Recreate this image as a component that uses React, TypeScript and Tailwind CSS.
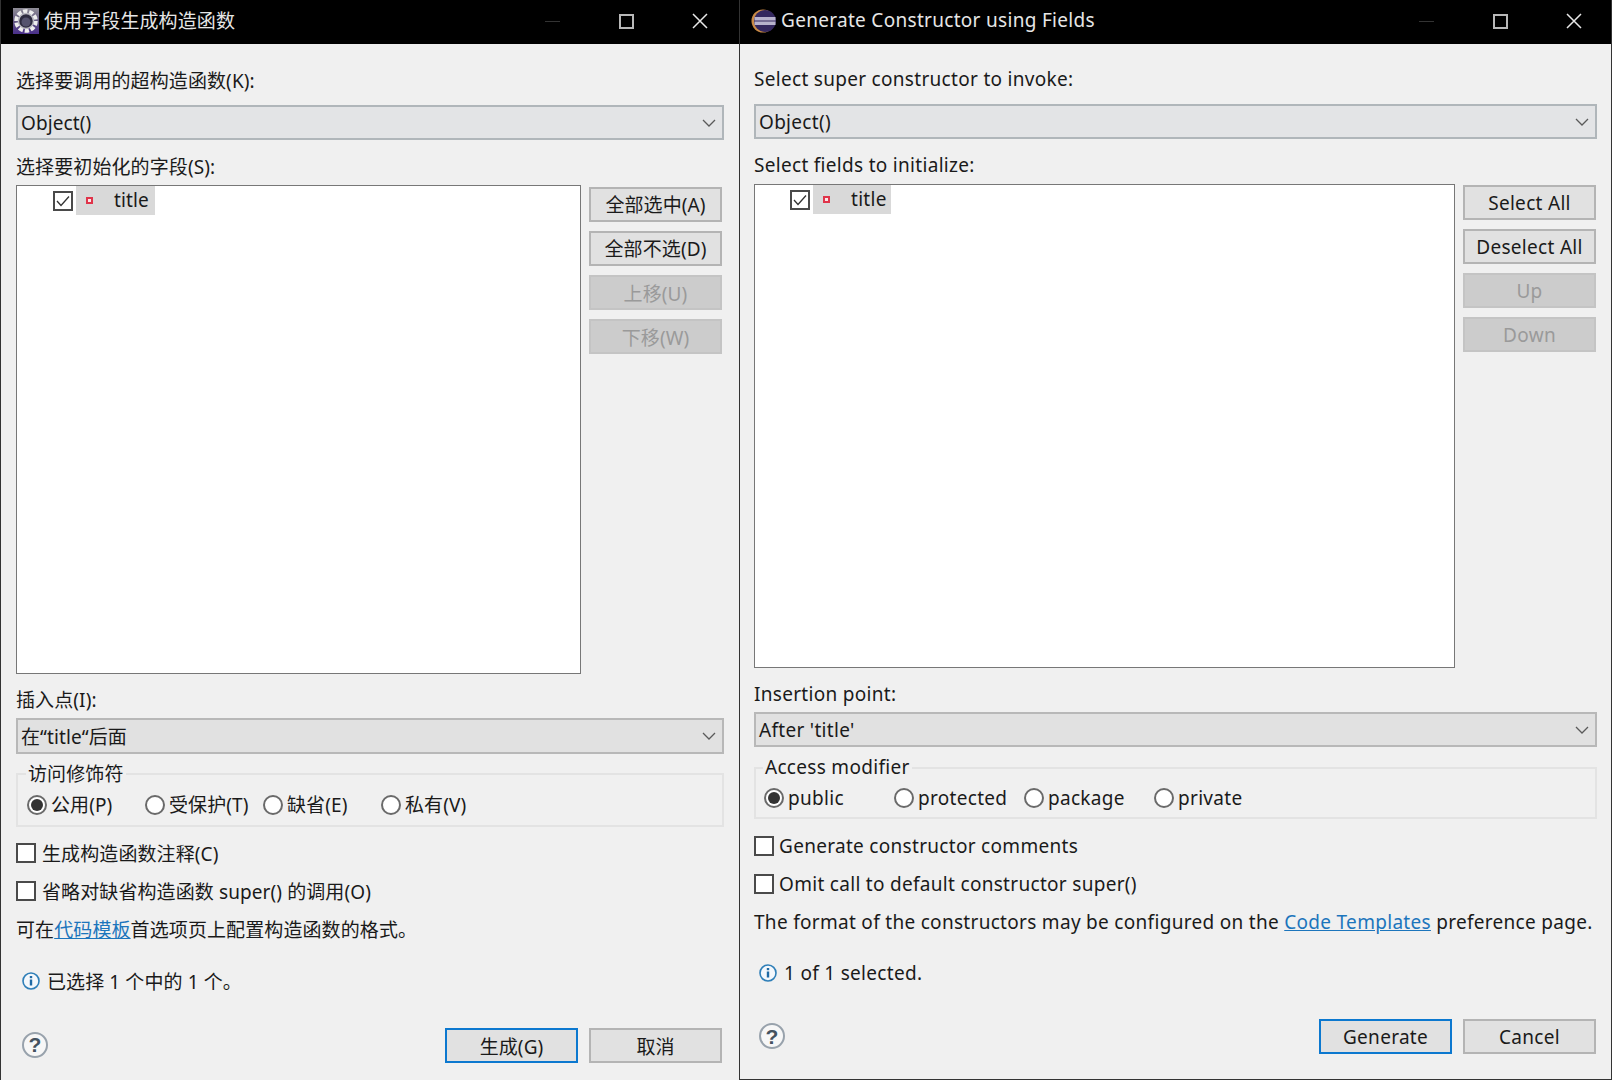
import React from "react";

const LeftLogo = () => (
  <svg width="26" height="26" viewBox="0 0 26 26" className="shrink-0">
    <defs>
      <linearGradient id="leftLogoBg" x1="0" y1="0" x2="0" y2="1">
        <stop offset="0" stopColor="#8f8d96" />
        <stop offset="0.55" stopColor="#5f5480" />
        <stop offset="1" stopColor="#4a2f8c" />
      </linearGradient>
    </defs>
    <rect x="0" y="0" width="26" height="26" fill="url(#leftLogoBg)" />
    <circle cx="13" cy="13" r="9.5" fill="none" stroke="#eeeeee" strokeWidth="4.5" strokeDasharray="4.2 1.75" />
    <circle cx="13" cy="13" r="7.5" fill="#2e2c40" stroke="#b9b8c0" strokeWidth="1.5" />
    <circle cx="13" cy="14" r="4.5" fill="#55536e" />
  </svg>
);

const RightLogo = () => (
  <svg width="25" height="24" viewBox="0 0 25 24" className="shrink-0">
    <circle cx="12" cy="12" r="11.5" fill="#c98a45" />
    <circle cx="14" cy="12" r="11" fill="#34285f" />
    <rect x="3.5" y="8" width="21" height="3.5" fill="#b7b2cc" />
    <rect x="3.5" y="12.5" width="21" height="3.5" fill="#b7b2cc" />
  </svg>
);

const WindowControls = () => (
  <div className="flex h-full">
    <div className="flex h-full w-[73px] items-center justify-center">
      <div className="h-px w-[15px] bg-[#333333]" />
    </div>
    <div className="flex h-full w-[74px] items-center justify-center">
      <div className="h-[15px] w-[15px] border-2 border-[#b8b8b8]" />
    </div>
    <div className="flex h-full w-[74px] items-center justify-center">
      <svg width="16" height="16" viewBox="0 0 16 16">
        <path d="M1 1 L15 15 M15 1 L1 15" stroke="#e8e8e8" strokeWidth="1.5" fill="none" />
      </svg>
    </div>
  </div>
);

const Combo = ({ children, className, tone }: { children: React.ReactNode; className: string; tone: string }) => (
  <div className={`flex items-center justify-between border-2 pl-[3px] pr-[6px] leading-none ${tone} ${className}`}>
    <span className="pt-[2px]">{children}</span>
    <svg width="14" height="8" viewBox="0 0 14 8">
      <path d="M1 1 L7 7 L13 1" stroke="#5a5a5a" strokeWidth="1.3" fill="none" />
    </svg>
  </div>
);

const PushButton = ({
  text,
  disabled,
  primary,
  className,
}: {
  text: string;
  disabled?: boolean;
  primary?: boolean;
  className: string;
}) => {
  let tone = "border-2 border-[#b4b4b4] bg-[#e1e1e1] text-[#1a1a1a]";
  if (disabled) tone = "border-2 border-[#c4c4c4] bg-[#cccccc] text-[#9a9a9a]";
  if (primary) tone = "border-2 border-[#0c78cf] bg-[#e1e1e1] text-[#1a1a1a]";
  return <div className={`flex w-[133px] items-center justify-center ${tone} ${className}`}>{text}</div>;
};

const Radio = ({ label, checked, className }: { label: string; checked?: boolean; className: string }) => (
  <div className={`flex items-center ${className}`}>
    <div className="flex h-[20px] w-[20px] shrink-0 items-center justify-center rounded-full border-2 border-[#6a6a6a] bg-white">
      {checked && <div className="h-[12px] w-[12px] rounded-full bg-[#333333]" />}
    </div>
    <span className="ml-[4px] whitespace-nowrap">{label}</span>
  </div>
);

const Check = ({ label, className, gap }: { label: string; className: string; gap: string }) => (
  <div className={`flex h-[20px] items-center ${className}`}>
    <div className="h-[20px] w-[20px] shrink-0 border-2 border-[#4a4a4a] bg-white" />
    <span className={`whitespace-nowrap ${gap}`}>{label}</span>
  </div>
);

const TreeItem = ({ wClass, indent }: { wClass: string; indent: string }) => (
  <div className={`flex h-[29px] items-center ${indent}`}>
    <div className="flex h-[20px] w-[20px] shrink-0 items-center justify-center border-2 border-[#4a4a4a] bg-white">
      <svg width="14" height="12" viewBox="0 0 14 12">
        <path d="M1 6 L5 10.5 L13 1.5" stroke="#333333" strokeWidth="1.3" fill="none" />
      </svg>
    </div>
    <div className={`ml-[3px] flex h-[29px] items-center bg-[#d9d9d9] pl-[10px] ${wClass}`}>
      <div className="h-[7px] w-[7px] border-[2px] border-[#e0344a] bg-[#fbe6e8]" />
      <span className="ml-[21px] leading-none">title</span>
    </div>
  </div>
);

const InfoIcon = () => (
  <svg width="18" height="18" viewBox="0 0 18 18" className="shrink-0">
    <circle cx="9" cy="9" r="8" fill="#f4f8fc" stroke="#2f7fb8" strokeWidth="1.6" />
    <rect x="7.8" y="7.5" width="2.4" height="6" fill="#1f6aa5" />
    <rect x="7.8" y="4" width="2.4" height="2.2" fill="#1f6aa5" />
  </svg>
);

const HelpIcon = () => (
  <div className="flex h-[26px] w-[26px] items-center justify-center rounded-full border-2 border-[#98a2ac] bg-[#f7f7f7] font-['Liberation_Sans',sans-serif] text-[21px] font-bold leading-none text-[#44525f]">
    ?
  </div>
);

const LeftDialog = () => (
  <div className="flex h-[1080px] w-[739px] shrink-0 flex-col border-l border-[#333333] bg-[#f0f0f0] text-[19px] leading-[24px] tracking-[0.1px] text-[#1a1a1a] font-['Noto_Sans','Noto_Sans_CJK_SC',sans-serif]">
    <div className="flex h-[44px] shrink-0 items-center justify-between bg-black pb-[2px] pl-[12px] pr-[2px] text-[#e6e6e6]">
      <div className="flex items-center gap-[5px]">
        <LeftLogo />
        <span className="mb-[1px]">使用字段生成构造函数</span>
      </div>
      <WindowControls />
    </div>
    <div className="flex flex-1 flex-col pl-[15px] pr-[15px]">
      <div className="mt-[24px] h-[24px] leading-[26px]">选择要调用的超构造函数(K):</div>
      <Combo className="mt-[13px] h-[35px]" tone="border-[#b0b6ba] bg-[#e3e4e6]">
        Object()
      </Combo>
      <div className="mt-[14px] h-[24px] leading-[26px]">选择要初始化的字段(S):</div>
      <div className="mt-[7px] flex h-[489px] gap-[8px]">
        <div className="w-[565px] border border-[#777777] bg-white">
          <TreeItem wClass="w-[79px]" indent="pl-[36px]" />
        </div>
        <div className="flex flex-col gap-[9px] pt-[2px]">
          <PushButton text="全部选中(A)" className="h-[35px]" />
          <PushButton text="全部不选(D)" className="h-[35px]" />
          <PushButton text="上移(U)" disabled className="h-[35px] pt-[2px]" />
          <PushButton text="下移(W)" disabled className="h-[35px] pt-[2px]" />
        </div>
      </div>
      <div className="mt-[13px] h-[24px] leading-[26px]">插入点(I):</div>
      <Combo className="mt-[7px] h-[36px]" tone="border-[#b8b8b8] bg-[#e1e1e1]">
        在“title“后面
      </Combo>
      <div className="relative mt-[19px] flex h-[54px] items-center border-2 border-[#e3e3e3] pl-[9px] pt-[10px]">
        <span className="absolute left-[8px] top-[-13px] bg-[#f0f0f0] px-[2px]">访问修饰符</span>
        <Radio label="公用(P)" checked className="w-[118px]" />
        <Radio label="受保护(T)" className="w-[118px]" />
        <Radio label="缺省(E)" className="w-[118px]" />
        <Radio label="私有(V)" className="w-[118px]" />
      </div>
      <Check label="生成构造函数注释(C)" className="mt-[16px]" gap="ml-[6px] pt-[2px]" />
      <Check label="省略对缺省构造函数 super() 的调用(O)" className="mt-[18px]" gap="ml-[6px] pt-[2px]" />
      <div className="mt-[16px] h-[24px] whitespace-nowrap leading-[27px]">
        可在<span className="text-[#1c75bc] underline">代码模板</span>首选项页上配置构造函数的格式。
      </div>
      <div className="mt-[28px] flex h-[24px] items-center gap-[7px] pl-[6px]">
        <InfoIcon />
        <span className="pt-[2px]">已选择 1 个中的 1 个。</span>
      </div>
      <div className="mt-[35px] flex items-center justify-between pr-[2px]">
        <div className="pb-[2px] pl-[6px]">
          <HelpIcon />
        </div>
        <div className="flex gap-[11px]">
          <PushButton text="生成(G)" primary className="h-[35px] pt-[2px]" />
          <PushButton text="取消" className="h-[35px] pt-[2px]" />
        </div>
      </div>
    </div>
  </div>
);

const RightDialog = () => (
  <div className="flex h-[1080px] w-[873px] shrink-0 flex-col border-x border-b border-[#333333] bg-[#f0f0f0] text-[19px] leading-[24px] tracking-[0.3px] text-[#1a1a1a] font-['Noto_Sans',sans-serif]">
    <div className="flex h-[44px] shrink-0 items-center justify-between bg-black pb-[2px] pl-[11px] text-[#e6e6e6]">
      <div className="flex items-center gap-[5px]">
        <RightLogo />
        <span className="mb-[2px]">Generate Constructor using Fields</span>
      </div>
      <WindowControls />
    </div>
    <div className="flex flex-1 flex-col pl-[14px] pr-[14px]">
      <div className="mt-[23px] h-[24px]">Select super constructor to invoke:</div>
      <Combo className="mt-[13px] h-[35px]" tone="border-[#b0b6ba] bg-[#e3e4e6]">
        Object()
      </Combo>
      <div className="mt-[14px] h-[24px]">Select fields to initialize:</div>
      <div className="mt-[7px] flex h-[484px] gap-[8px]">
        <div className="w-[701px] border border-[#777777] bg-white">
          <TreeItem wClass="w-[78px]" indent="pl-[35px]" />
        </div>
        <div className="flex flex-col gap-[9px] pt-[1px]">
          <PushButton text="Select All" className="h-[35px]" />
          <PushButton text="Deselect All" className="h-[35px]" />
          <PushButton text="Up" disabled className="h-[35px]" />
          <PushButton text="Down" disabled className="h-[35px]" />
        </div>
      </div>
      <div className="mt-[14px] h-[24px]">Insertion point:</div>
      <Combo className="mt-[6px] h-[35px]" tone="border-[#b8b8b8] bg-[#e1e1e1]">
        After 'title'
      </Combo>
      <div className="relative mt-[20px] flex h-[52px] items-center border-2 border-[#e3e3e3] pl-[8px] pt-[10px]">
        <span className="absolute left-[7px] top-[-14px] bg-[#f0f0f0] px-[2px]">Access modifier</span>
        <Radio label="public" checked className="w-[130px]" />
        <Radio label="protected" className="w-[130px]" />
        <Radio label="package" className="w-[130px]" />
        <Radio label="private" className="w-[130px]" />
      </div>
      <Check label="Generate constructor comments" className="mt-[17px]" gap="ml-[5px]" />
      <Check label="Omit call to default constructor super()" className="mt-[18px]" gap="ml-[5px]" />
      <div className="mt-[16px] h-[24px] whitespace-nowrap">
        The format of the constructors may be configured on the{" "}
        <span className="text-[#1c75bc] underline">Code Templates</span> preference page.
      </div>
      <div className="mt-[27px] flex h-[24px] items-center gap-[7px] pl-[5px]">
        <InfoIcon />
        <span>1 of 1 selected.</span>
      </div>
      <div className="mt-[34px] flex items-center justify-between pr-[1px]">
        <div className="pb-[1px] pl-[5px]">
          <HelpIcon />
        </div>
        <div className="flex gap-[11px]">
          <PushButton text="Generate" primary className="h-[35px]" />
          <PushButton text="Cancel" className="h-[35px]" />
        </div>
      </div>
    </div>
  </div>
);

const App: React.FC = () => {
  return (
    <div className="flex h-[1080px] w-[1612px] overflow-hidden bg-[#f0f0f0]">
      <LeftDialog />
      <RightDialog />
    </div>
  );
};

export default App;
